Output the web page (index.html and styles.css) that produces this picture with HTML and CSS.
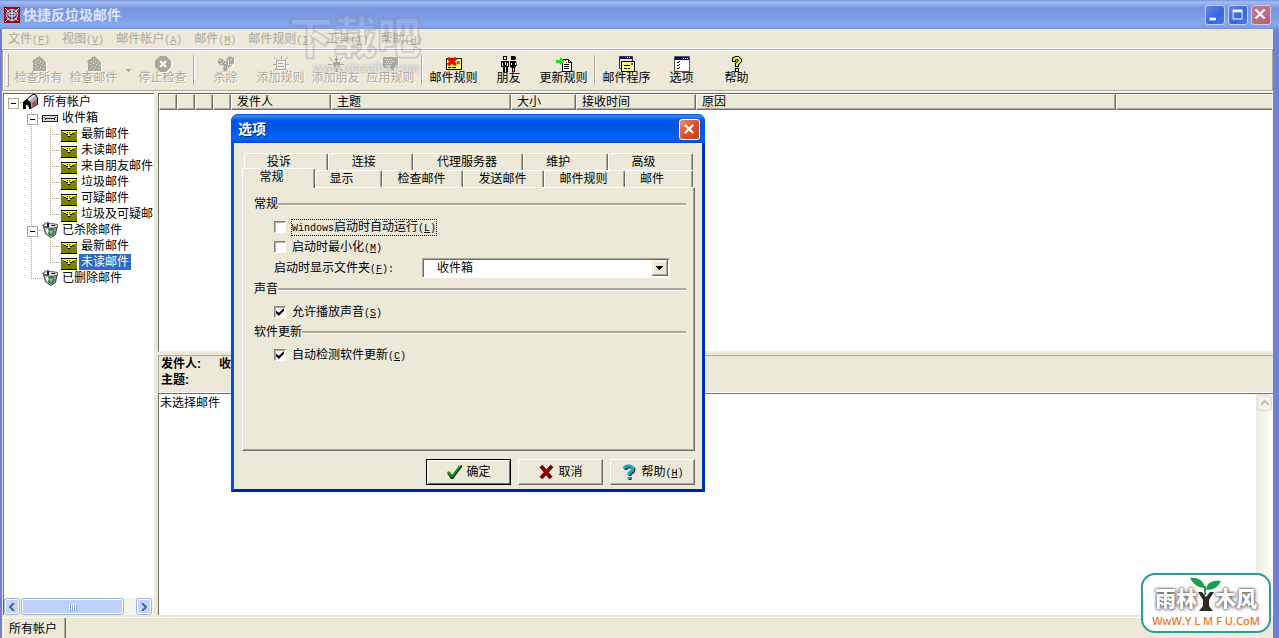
FILE: index.html
```html
<!DOCTYPE html>
<html lang="zh-CN">
<head>
<meta charset="utf-8">
<title>快捷反垃圾邮件</title>
<link rel="stylesheet" href="styles.css">
</head>
<body>
<svg class="defs" aria-hidden="true">
  <symbol id="house" viewBox="0 0 16 16"><path fill="#aca899" d="M8 0h1v1h1v1h1v1h1v1h1v1h1v1h1v9H2V6H1V5h1V4h1V3h2V2h1V1h2z"/><path fill="#ece9d8" d="M7 3h1v1H7zM5 5h1v1H5zM9 5h1v1H9zM12 6h1v1h-1zM4 8h1v1H4zM7 7h1v1H7zM10 8h1v1h-1zM13 9h1v1h-1zM6 10h1v1H6zM9 11h1v1H9zM4 12h1v1H4zM12 12h1v1h-1zM7 13h1v1H7z"/></symbol>
  <symbol id="mail" viewBox="0 0 16 12"><path fill="#808000" d="M0 0h16v12H0z"/><path fill="#ff0" d="M1 1h14v1h-2v1h-2v1H9v2H7V4H5V3H3V2H1z"/><path fill="#000" d="M0 0h16v1H0zM3 3h2v1H3zM5 4h2v1H5zM6 2h1v1H6zM7 6h2v1H7zM9 4h2v1H9zM11 3h2v1h-2zM0 11h16v1H0z"/><path fill="#c03000" d="M8 2h1v2H8zM8 7h1v4H8z"/></symbol>
  <symbol id="bin" viewBox="0 0 16 16"><path fill="#a4a4a4" stroke="#333" d="M1.500 4.500l2 7 5 4 5-3 1.500-8-6 2z"/><path fill="#ddd" stroke="#555" d="M.5 3.500l4-3 5 1 6 1v3l-7 1z"/><path fill="#222" d="M5 1h2v4H5zM9 3h4v1H9z"/><path fill="#eee" d="M3 6l3 1 1 6-2-1z"/><path fill="none" stroke="#11843b" stroke-width="1.500" d="M7 9l2-2 3 1M12 9l-1 3-3 1M7 10v3"/></symbol>
  <symbol id="box" viewBox="0 0 16 8"><path fill="#222" d="M0 1h16v7H0z"/><path fill="#ddd" d="M1 2h14v5H1z"/><path fill="#222" d="M3 4h10v1H3zM2 3h1v1H2zM13 3h1v1h-1zM3 6h1v-1H3zM12 6h1v-1h-1z"/></symbol>
  <symbol id="mailbox" viewBox="0 0 16 16"><path fill="#aaa" stroke="#000" d="M1.500 7.500l8-7h3l2 3v7l-7 4z"/><path fill="#000" d="M0 8l4-3 4 4v6H6v-4H3v4H0z"/><path fill="#eee" d="M5 5l6-4 1 1-6 5z"/><path fill="#777" d="M9 9l5-4v5l-5 4z"/><path fill="#d22" d="M10 8h2v3h-2z"/></symbol>
</svg>

<header class="titlebar">
  <svg class="app-icon" viewBox="0 0 16 16"><path fill="#b40010" d="M0 0h16v16H0z"/><circle cx="8" cy="8" r="5.500" fill="#4a3050" stroke="#8fb8dc" stroke-width="1.500"/><path stroke="#fff" fill="none" d="M1 1l4 4M15 1l-4 4M1 15l4-4M15 15l-4-4M8 2v12M5 6h6v3H5z"/><path fill="#300" d="M0 0h3v1H1v2H0zM13 15h3v-3h-1v2h-2z"/></svg>
  <h1>快捷反垃圾邮件</h1>
  <button class="win-btn" aria-label="最小化"><svg viewBox="0 0 20 20"><path fill="#fff" d="M4 13h7v3H4z"/></svg></button>
  <button class="win-btn" aria-label="最大化"><svg viewBox="0 0 20 20"><path fill="#fff" fill-rule="evenodd" d="M4 4h11v11H4zM5 7v7h9V7z"/></svg></button>
  <button class="win-btn win-close" aria-label="关闭"><svg viewBox="0 0 20 20"><path stroke="#fff" stroke-width="2.400" d="M4 4l10 10M14 4L4 14"/></svg></button>
</header>

<div class="frame">
  <nav class="menubar">
    <button disabled>文件<kbd>(<u>F</u>)</kbd></button><button disabled>视图<kbd>(<u>V</u>)</kbd></button><button disabled>邮件帐户<kbd>(<u>A</u>)</kbd></button><button disabled>邮件<kbd>(<u>M</u>)</kbd></button><button disabled>邮件规则<kbd>(<u>I</u>)</kbd></button><button disabled>工具<kbd>(<u>T</u>)</kbd></button><button disabled>帮助<kbd>(<u>H</u>)</kbd></button>
  </nav>

  <div class="toolbar" role="toolbar">
    <span class="grip"></span>
    <button class="tool" disabled><svg viewBox="0 0 16 16"><use href="#house"/></svg>检查所有</button>
    <button class="tool" disabled><svg viewBox="0 0 16 16"><use href="#house"/></svg>检查邮件</button>
    <button class="drop" disabled aria-label="更多"><svg viewBox="0 0 5 3"><path fill="#aca899" d="M0 0h5v1H4v1H3v1H2V2H1V1H0z"/></svg></button>
    <button class="tool" disabled><svg viewBox="0 0 16 16"><path fill="#aca899" d="M5 0h6l5 5v6l-5 5H5l-5-5V5z"/><path stroke="#fff" stroke-width="2" d="M5 5l6 6M11 5l-6 6"/></svg>停止检查</button>
    <span class="sep"></span>
    <button class="tool" disabled><svg viewBox="0 0 16 16"><path fill="#aca899" d="M0 4l2-2 4 2 2 2 1-4 3-2 4 2v5l-3 3-3 3-1 2-2 1-2-3 1-3-4-1-2-2z"/><path fill="#fff" d="M2 4h1v1H2zM5 5h1v1H5zM3 7h1v1H3zM7 7h1v1H7zM10 4h1v5h-1zM12 8h1v1h-1zM13 3h1v1h-1zM9 11h1v1H9z"/></svg>杀除</button>
    <button class="tool" disabled><svg viewBox="0 0 16 16"><path stroke="#aca899" fill="none" d="M3.500 4.500h9v9h-9zM5 7.500h5M5 10.500h6M8.500 0v4M1 1l4 4M15 1l-4 4M0 8.500h3M13 8.500h3M1 15l3-3M15 15l-3-3"/></svg>添加规则</button>
    <button class="tool" disabled><svg viewBox="0 0 16 16"><path stroke="#aca899" fill="none" d="M8.500 0v16M1 1l4 4M15 1l-4 4M0 8.500h4M12 8.500h4M1 15l3-3M15 15l-3-3"/><path fill="#aca899" d="M7 2h3v3H7zM5 6h7v5h-2v5H9v-4H8v4H6v-5H5z"/></svg>添加朋友</button>
    <button class="tool" disabled><svg viewBox="0 0 16 16"><path fill="#aca899" d="M0 1h15v11h-4v4l-4-4H0z"/><path stroke="#ece9d8" stroke-dasharray="1 1" d="M2 3.500h8M3 5.500h10M2 7.500h8M3 9.500h5"/></svg>应用规则</button>
    <span class="sep"></span>
    <button class="tool"><svg viewBox="0 0 16 16"><path fill="#ffff80" stroke="#000" d="M.5 2.500h15v11H.5z"/><path fill="#fff" d="M8 5h5v3H8z"/><path stroke="#000" d="M2 11.500h3M6 11.500h4"/><path fill="#c07000" d="M11 5h3v3h-3z"/><path stroke="#f00" stroke-width="3.500" d="M2 2l8 7M10 2L2 9"/></svg>邮件规则</button>
    <button class="tool"><svg viewBox="0 0 16 16"><path fill="#000" d="M2 0h4v4H2zM0 5h8v6H7v5H5v-5H4v5H2v-5H0zM10 0h4l1 2-1 2h-4zM9 5h6l1 5h-1l-1 2v4h-1v-4h-1v4h-1v-4l-2-1z"/><path fill="#fff" d="M3 1h2v2H3zM1 7h1v3H1zM6 7h1v3H6zM4 6h1v3H4zM10 7h1v2h-1zM14 7h1v2h-1z"/></svg>朋友</button>
    <button class="tool"><svg viewBox="0 0 16 16"><path fill="#fff" stroke="#000" d="M6.500 3.500h6l3 3v9h-9z"/><path stroke="#000" fill="none" d="M12.500 3.500v3h3M8 8.500h5M8 10.500h5M8 12.500h5"/><path fill="#20e020" d="M0 4h4V1l5 4-5 4V7H0z"/><path fill="#d00" d="M9 4h1v1H9zM10 6h1v1h-1z"/></svg>更新规则</button>
    <span class="sep"></span>
    <button class="tool"><svg viewBox="0 0 16 16"><path fill="#e0e0e0" stroke="#333" d="M.5.5h13v12H.5z"/><path fill="#000080" d="M1 1h12v2H1z"/><path fill="#fff" d="M8 1h1v1H8zM10 1h1v1h-1z"/><path fill="#ffff90" stroke="#000" d="M2.500 5.500h13v10h-13z"/><path stroke="#000" d="M5 9.500h6M5 12.500h3M9 12.500h2"/><path fill="#a06000" d="M12 7h2v2h-2z"/></svg>邮件程序</button>
    <button class="tool"><svg viewBox="0 0 16 16"><path fill="#fff" stroke="#555" d="M.5.5h15v15H.5z"/><path fill="#000080" d="M1 1h14v3H1z"/><path fill="#fff" d="M9 2h1v1H9zM11 2h1v1h-1zM13 2h1v1h-1z"/><path stroke="#000" fill="none" d="M3 6l1 1 2-2M3 9l1 1 2-2M3 12l1 1 2-2"/></svg>选项</button>
    <button class="tool"><svg viewBox="0 0 16 16"><path fill="none" stroke="#000" stroke-width="4" d="M5 6V3l2-1h2l2 2v1L8 8v3M8 12v4"/><path fill="none" stroke="#ff0" stroke-width="2" d="M5 5V3l2-1h2l2 2v1L8 8v2M8 13v2"/></svg>帮助</button>
  </div>

  <div class="workspace">
    <aside class="side">
      <ul class="tree">
        <li><button class="cell dash" aria-label="折叠"></button><svg class="ico" viewBox="0 0 16 16"><use href="#mailbox"/></svg><span>所有帐户</span></li>
        <li><i class="cell"></i><button class="cell dash down" aria-label="折叠"></button><svg class="ico" viewBox="0 -4 16 16"><use href="#box" width="16" height="8"/></svg><span>收件箱</span></li>
        <li><i class="cell"></i><i class="cell line"></i><i class="cell line dash"></i><svg class="ico" viewBox="0 -4 16 16"><use href="#mail" width="16" height="12"/></svg><span>最新邮件</span></li>
        <li><i class="cell"></i><i class="cell line"></i><i class="cell line dash"></i><svg class="ico" viewBox="0 -4 16 16"><use href="#mail" width="16" height="12"/></svg><span>未读邮件</span></li>
        <li><i class="cell"></i><i class="cell line"></i><i class="cell line dash"></i><svg class="ico" viewBox="0 -4 16 16"><use href="#mail" width="16" height="12"/></svg><span>来自朋友邮件</span></li>
        <li><i class="cell"></i><i class="cell line"></i><i class="cell line dash"></i><svg class="ico" viewBox="0 -4 16 16"><use href="#mail" width="16" height="12"/></svg><span>垃圾邮件</span></li>
        <li><i class="cell"></i><i class="cell line"></i><i class="cell line dash"></i><svg class="ico" viewBox="0 -4 16 16"><use href="#mail" width="16" height="12"/></svg><span>可疑邮件</span></li>
        <li><i class="cell"></i><i class="cell line"></i><i class="cell up dash"></i><svg class="ico" viewBox="0 -4 16 16"><use href="#mail" width="16" height="12"/></svg><span>垃圾及可疑邮</span></li>
        <li><i class="cell"></i><button class="cell line dash" aria-label="折叠"></button><svg class="ico" viewBox="0 0 16 16"><use href="#bin"/></svg><span>已杀除邮件</span></li>
        <li><i class="cell"></i><i class="cell line"></i><i class="cell line dash"></i><svg class="ico" viewBox="0 -4 16 16"><use href="#mail" width="16" height="12"/></svg><span>最新邮件</span></li>
        <li><i class="cell"></i><i class="cell line"></i><i class="cell up dash"></i><svg class="ico" viewBox="0 -4 16 16"><use href="#mail" width="16" height="12"/></svg><span class="selected">未读邮件</span></li>
        <li><i class="cell"></i><i class="cell up dash"></i><svg class="ico" viewBox="0 0 16 16"><use href="#bin"/></svg><span>已删除邮件</span></li>
      </ul>
      <div class="hscroll">
        <button class="sb-btn" aria-label="向左"><svg viewBox="0 0 8 8"><path fill="none" stroke="#4d6185" stroke-width="2" d="M6 0L2 4l4 4"/></svg></button>
        <span class="thumb"><i></i><i></i><i></i><i></i></span>
        <span class="track"></span>
        <button class="sb-btn" aria-label="向右"><svg viewBox="0 0 8 8"><path fill="none" stroke="#4d6185" stroke-width="2" d="M2 0l4 4-4 4"/></svg></button>
      </div>
    </aside>

    <main class="content">
      <section class="list">
        <table>
          <colgroup><col class="c-flag"><col class="c-flag"><col class="c-flag"><col class="c-flag"><col class="c-from"><col class="c-subject"><col class="c-size"><col class="c-time"><col class="c-reason"><col></colgroup>
          <thead><tr><th></th><th></th><th></th><th></th><th>发件人</th><th>主题</th><th>大小</th><th>接收时间</th><th>原因</th><th></th></tr></thead>
        </table>
      </section>
      <section class="info">
        <p><span>发件人:</span><span>收</span></p>
        <p><span>主题:</span></p>
      </section>
      <section class="preview">
        <p>未选择邮件</p>
        <div class="vscroll"><button class="vs-btn" disabled aria-label="向上"><svg viewBox="0 0 8 8"><path fill="none" stroke="#c5c3b4" stroke-width="2" d="M0 6l4-4 4 4"/></svg></button></div>
      </section>
    </main>
  </div>

  <footer class="status"><button>所有帐户</button></footer>
</div>

<div class="watermark"><b>下载吧</b><small>www.xiazaiba.com</small></div>

<div class="brand">
  <div class="brand-name"><span>雨林</span><svg viewBox="0 0 32 36"><path fill="#302824" d="M8 16h4l4 5 4-5h4l-5 8v6l4 5H9l4-5v-6z"/><path fill="#16a049" d="M0 2c8-1 14 3 15 10C8 12 3 8 0 2zM31 5c-8-1-14 1-15 9 8 0 12-3 15-9z"/><path fill="none" stroke="#16a049" stroke-width="2" d="M15 10v9"/></svg><span>木风</span></div>
  <div class="brand-url">WwW.Y L M F U.CoM</div>
</div>

<div class="dialog" role="dialog" aria-labelledby="dlg-title">
  <div class="dlg-title"><h2 id="dlg-title">选项</h2><button class="dlg-close" aria-label="关闭"><svg viewBox="0 0 20 20"><path stroke="#fff" stroke-width="2.400" d="M5 5l9 9M14 5l-9 9"/></svg></button></div>
  <div class="dlg-body">
    <div class="tabs back"><button>投诉</button><button>连接</button><button class="wide">代理服务器</button><button>维护</button><button>高级</button></div>
    <div class="tabs front"><button class="active">常规</button><button>显示</button><button class="wide">检查邮件</button><button class="wide">发送邮件</button><button class="wide">邮件规则</button><button>邮件</button></div>
    <div class="page">
      <fieldset>
        <legend>常规</legend>
        <div class="row"><input type="checkbox" id="o1"><label for="o1" class="focus"><kbd>Windows</kbd>启动时自动运行<kbd>(<u>L</u>)</kbd></label></div>
        <div class="row"><input type="checkbox" id="o2"><label for="o2">启动时最小化<kbd>(<u>M</u>)</kbd></label></div>
        <div class="row pick"><label for="o3">启动时显示文件夹<kbd>(<u>F</u>):</kbd></label>
          <span class="combo"><select id="o3"><option>收件箱</option></select><svg viewBox="0 0 16 16"><path fill="#ece9d8" d="M0 0h16v16H0z"/><path fill="#fff" d="M1 1h14v1H2v13H1z"/><path fill="#716f64" d="M15 0h1v16H0v-1h15z"/><path fill="#aca899" d="M14 1h1v14H1v-1h13z"/><path d="M4 6h7v1h-1v1H9v1H8v1H7V9H6V8H5V7H4z"/></svg></span></div>
      </fieldset>
      <fieldset>
        <legend>声音</legend>
        <div class="row"><input type="checkbox" id="o4" checked><label for="o4">允许播放声音<kbd>(<u>S</u>)</kbd></label></div>
      </fieldset>
      <fieldset>
        <legend>软件更新</legend>
        <div class="row"><input type="checkbox" id="o5" checked><label for="o5">自动检测软件更新<kbd>(<u>C</u>)</kbd></label></div>
      </fieldset>
    </div>
    <div class="actions">
      <button class="default"><svg viewBox="0 0 16 16"><path fill="#0a3010" d="M1 9l3-1 2 3 7-9 3-1v2L7 15H5z"/><path fill="#18a018" d="M1 8l2-1 3 4 7-9h2L7 13H5z"/></svg>确定</button>
      <button><svg viewBox="0 0 16 16"><path stroke="#800000" stroke-width="4" d="M3 2l10 12M14 2L3 14"/></svg>取消</button>
      <button><svg viewBox="0 0 16 16"><path fill="none" stroke="#06203c" stroke-width="3" d="M5 6V4l2-1h3l3 2-1 3-3 2v2M9 13v3"/><path fill="none" stroke="#12a8b8" stroke-width="3" d="M3 5l1-2 3-1h2l3 2-1 3-3 2v2M8 13v2"/></svg><span>帮助<kbd>(<u>H</u>)</kbd></span></button>
    </div>
  </div>
</div>
</body>
</html>
```
FILE: styles.css
```css
* { box-sizing: border-box; }
body {
  margin: 0;
  height: 100vh;
  overflow: hidden;
  display: flex;
  flex-direction: column;
  background: #7080d8;
  color: #000;
  font: 12px/16px "Liberation Sans", "Noto Sans CJK SC", sans-serif;
}
button, select, input, h1, h2, p, ul, fieldset, legend { font: inherit; color: inherit; margin: 0; padding: 0; }
button { background: none; border: 0; white-space: nowrap; }
kbd { font: 10px/12px "Liberation Mono", monospace; }
svg { display: block; flex: none; }
.defs { position: absolute; width: 0; height: 0; }

/* title bar */
.titlebar {
  flex: none;
  height: 29px;
  display: flex;
  align-items: center;
  gap: 3px;
  padding: 1px 8px 0 4px;
  background: linear-gradient(#7892dd 0, #a2bdf0 2px, #7b96e1 8px, #7b98e2 14px, #84a9ee 25px, #7a93dd 29px);
}
.app-icon { width: 16px; height: 16px; }
.titlebar h1 { flex: 1; color: #dbe4f8; font-size: 14px; font-weight: 700; }
.win-btn { width: 20px; height: 20px; border: 1px solid #bccdf8; border-radius: 3px; background: linear-gradient(135deg, #5e88ee, #3766dc 60%, #4a7cf0); }
.win-close { background: linear-gradient(135deg, #c08090, #b06078); border-color: #d8c4dc; }

/* window interior */
.frame { flex: 1; min-height: 0; margin: 0 6px 0 2px; background: #ece9d8; display: flex; flex-direction: column; }
.menubar { flex: none; display: flex; height: 20px; align-items: center; border-bottom: 1px solid #fff; }
.menubar button { padding: 0 6px; color: #aca899; }
.toolbar {
  flex: none;
  height: 42px;
  display: flex;
  align-items: center;
  padding: 0 1px;
  border: 1px solid #aca899;
  box-shadow: inset 1px 1px #fff, 0 1px #fff;
}
.grip { width: 3px; height: 34px; margin: 0 2px; border: 1px solid #fff; border-right-color: #aca899; border-bottom-color: #aca899; }
.tool { width: 55px; display: flex; flex-direction: column; align-items: center; line-height: 12px; }
.tool svg { width: 16px; height: 16px; }
.tool:disabled { color: #aca899; text-shadow: 1px 1px #fff; }
.tool:disabled svg { filter: drop-shadow(1px 1px #fff); }
.drop { width: 14px; }
.drop svg { width: 5px; height: 3px; margin: 0 auto; }
.sep { width: 2px; height: 30px; margin: 0 3px; border-left: 1px solid #aca899; border-right: 1px solid #fff; }

.workspace { flex: 1; min-height: 0; display: flex; gap: 4px; padding: 2px 0 2px 1px; }
.side { flex: none; width: 151px; display: flex; flex-direction: column; background: #fff; border-top: 1px solid #716f64; border-left: 1px solid #716f64; }
.tree { flex: 1; overflow: hidden; list-style: none; }
.tree li { display: flex; height: 16px; align-items: center; }
.tree span { flex: none; padding: 0 2px; margin-left: 1px; white-space: nowrap; }
.tree .selected { background: #316ac5; color: #fff; }
.ico { width: 16px; height: 16px; margin-right: 1px; }
.cell { flex: none; position: relative; width: 19px; height: 16px; --v: 0 0; --h: 0 0; background-image: repeating-linear-gradient(#aca899 0 1px, transparent 1px 2px), repeating-linear-gradient(90deg, #aca899 0 1px, transparent 1px 2px); background-repeat: no-repeat; background-position: 8px 0, 8px 8px; background-size: var(--v), var(--h); }
.line { --v: 1px 16px; }
.up { --v: 1px 8px; }
.down { --v: 1px 16px; }
.dash { --h: 11px 1px; }
button.cell::before { content: ""; position: absolute; left: 4px; top: 4px; width: 9px; height: 9px; border: 1px solid #aca899; background: linear-gradient(#000, #000) center / 5px 1px no-repeat #fff; }

.hscroll { flex: none; height: 17px; display: flex; gap: 1px; padding-right: 2px; background: #f5f4ee; }
.sb-btn { width: 16px; display: grid; place-items: center; border: 1px solid #9db6ea; border-radius: 3px; background: #c6d5fd; box-shadow: inset 0 0 0 1px #fff; }
.sb-btn svg { width: 8px; height: 8px; }
.thumb { flex: 1; display: flex; gap: 1px; justify-content: center; align-items: center; border: 1px solid #9db6ea; border-radius: 3px; background: #c0d1fc; box-shadow: inset 0 0 0 1px #fff; }
.thumb i { width: 1px; height: 6px; background: #eef4fe; box-shadow: 1px 1px #8cb0f8; }
.track { width: 10px; }

.content { flex: 1; min-width: 0; display: flex; flex-direction: column; gap: 3px; }
.list { flex: 258; background: #fff; border: 1px solid #716f64; border-right-color: #f1efe2; border-bottom-color: #f1efe2; }
table { width: 100%; border-collapse: separate; border-spacing: 0; table-layout: fixed; }
th { height: 16px; padding: 0 5px; overflow: hidden; text-align: left; font-weight: 400; line-height: 14px; white-space: nowrap; background: #ece9d8; border: 1px solid #fff; border-right-color: #716f64; border-bottom-color: #716f64; box-shadow: inset -1px -1px #aca899; }
th:last-child { border-right: 0; box-shadow: inset 0 -1px #aca899; }
.c-flag { width: 18px; }
.c-from { width: 100px; }
.c-subject { width: 180px; }
.c-size { width: 65px; }
.c-time { width: 120px; }
.c-reason { width: 420px; }
.info { flex: none; padding: 0 2px 4px; border-top: 1px solid #aca899; border-left: 1px solid #aca899; border-bottom: 1px solid #fff; font-weight: 700; }
.info p { display: flex; gap: 18px; }
.preview { flex: 222; margin-top: -3px; display: flex; background: #fff; border-top: 1px solid #716f64; border-left: 1px solid #716f64; }
.preview p { flex: 1; padding: 1px; }
.vscroll { width: 17px; padding: 1px; background: linear-gradient(90deg, #eeede5, #fefefb); }
.vs-btn { width: 15px; height: 16px; display: grid; place-items: center; border: 1px solid #dddbcd; border-radius: 3px; background: #f3f2ea; }
.vs-btn svg { width: 8px; height: 8px; }
.status { flex: none; display: flex; height: 21px; padding-left: 1px; border-top: 1px solid #fff; }
.status button { padding: 2px 8px 0 5px; border-left: 1px solid #fff; border-right: 1px solid #716f64; box-shadow: inset -1px 0 #aca899; }

/* overlays */
.watermark { position: absolute; left: 289px; top: 15px; width: 134px; display: flex; flex-direction: column; color: rgba(255, 255, 255, .15); pointer-events: none; }
.watermark b { font-size: 44px; line-height: 48px; font-weight: 900; -webkit-text-stroke: 2px rgba(120, 125, 140, .3); }
.watermark small { font-size: 12px; line-height: 10px; padding-right: 4px; font-weight: 700; text-align: right; color: rgba(255, 255, 255, .6); text-shadow: 0 0 2px #999; }
.brand { position: absolute; right: 8px; bottom: 5px; width: 130px; height: 60px; border: 2px solid #2b9c97; border-radius: 14px; background: #fff; text-align: center; }
.brand-name { display: flex; justify-content: center; align-items: center; height: 38px; color: #fff; font-size: 21px; font-weight: 900; text-shadow: 0 0 2px #555, 0 0 3px #777, 1px 1px 4px #888; }
.brand-name span { padding-top: 10px; }
.brand-name svg { width: 32px; height: 36px; margin: 0 -7px; }
.brand-url { color: #ee7a22; font: 600 11px/16px "Open Sans", sans-serif; white-space: nowrap; }

/* options dialog */
.dialog { position: absolute; left: 231px; top: 114px; width: 474px; background: #ece9d8; border: 3px solid #0a4ddc; border-top: 0; border-right-color: #0030b8; border-bottom-color: #0024a8; border-radius: 7px 7px 0 0; }
.dlg-title { display: flex; align-items: center; height: 29px; margin: 0 -3px; padding: 1px 5px 0 7px; border-radius: 7px 7px 0 0; background: linear-gradient(#0a4fd8 0, #3a8cff 2px, #0058e6 6px, #0054e3 14px, #0066ff 25px, #0048d0 29px); }
.dlg-title h2 { flex: 1; color: #fff; font-size: 14px; font-weight: 700; text-shadow: 1px 1px #0a2880; }
.dlg-close { width: 21px; height: 21px; border: 1px solid #fff; border-radius: 3px; background: linear-gradient(135deg, #f09070, #e0502c 50%, #c83c18); }
.dlg-body { padding: 10px 7px 4px 8px; }
.tabs { display: grid; height: 17px; margin: 0 2px; }
.back { grid-template-columns: 84fr 85fr 109fr 85fr 85fr; }
.front { grid-template-columns: 71fr 67fr 81fr 81fr 81fr 68fr; }
.tabs button { padding-right: 14px; line-height: 16px; border-top: 1px solid #fff; border-left: 1px solid #fff; border-right: 1px solid #716f64; border-radius: 2px 2px 0 0; box-shadow: inset -1px 0 #aca899; }
.tabs .wide { padding-right: 2px; }
.tabs .active { position: relative; z-index: 1; margin: -2px 0 -1px -2px; line-height: 14px; padding-bottom: 4px; background: #ece9d8; }
.page { height: 264px; padding: 8px 8px 0 11px; border: 1px solid #fff; border-right-color: #716f64; border-bottom-color: #716f64; box-shadow: inset -1px -1px #aca899; }
fieldset { border: 0; min-width: 0; display: flex; flex-direction: column; padding-left: 20px; padding-bottom: 2px; }
legend { display: flex; align-items: center; width: calc(100% + 20px); margin-left: -20px; height: 16px; padding-bottom: 0; }
legend::after { content: ""; flex: 1; height: 2px; background: #aca899; border-bottom: 1px solid #fff; }
.row { display: flex; align-items: center; gap: 6px; height: 20px; }
fieldset .row:nth-of-type(1) { margin-top: 5px; }
.row label { line-height: 14px; white-space: nowrap; }
.focus { outline: 1px dotted #000; }
.row input { appearance: none; width: 12px; height: 12px; border: 1px solid #808080; border-right-color: #fff; border-bottom-color: #fff; background: #fff; box-shadow: inset 1px 1px #b8b5a8; }
.row input:checked::before { content: ""; display: block; width: 8px; height: 8px; margin: 1px; background: #000; clip-path: polygon(0 30%, 35% 60%, 100% 0, 100% 35%, 35% 100%, 0 65%); }
.pick { height: 22px; justify-content: space-between; padding-right: 16px; }
.combo { position: relative; width: 248px; }
.combo select { display: block; width: 100%; height: 20px; padding-left: 14px; appearance: none; border: 1px solid #aca899; border-right-color: #fff; border-bottom-color: #fff; border-radius: 0; background: #fff; box-shadow: inset 1px 1px #716f64; }
.combo svg { position: absolute; right: 2px; top: 2px; width: 16px; height: 16px; pointer-events: none; }
.actions { display: flex; justify-content: flex-end; gap: 7px; padding-top: 8px; }
.actions button { width: 85px; height: 26px; display: flex; align-items: center; justify-content: center; gap: 4px; border: 1px solid #fff; border-right-color: #716f64; border-bottom-color: #716f64; box-shadow: inset -1px -1px #aca899; }
.actions .default { border-color: #000; box-shadow: inset 1px 1px #fff, inset -1px -1px #716f64; }
.actions svg { width: 16px; height: 16px; }
```
